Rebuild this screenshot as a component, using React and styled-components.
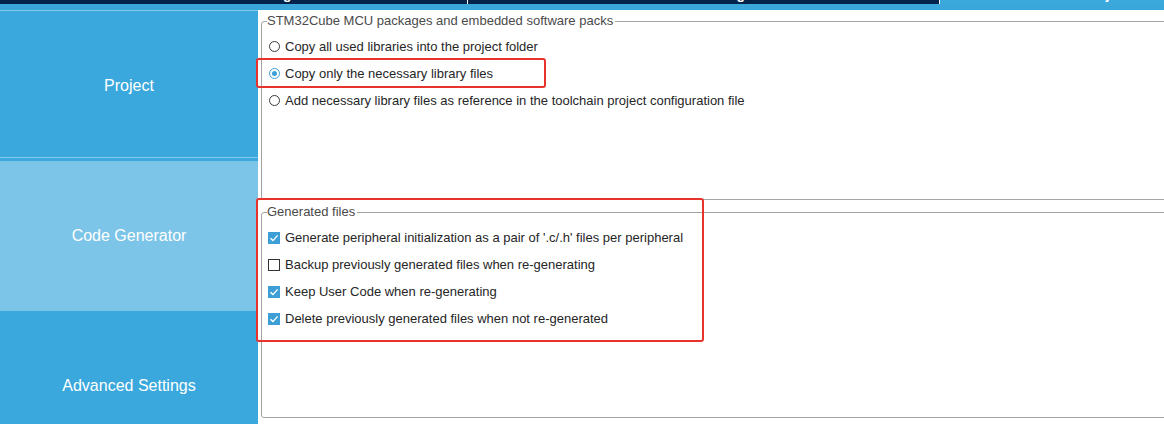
import React from "react";
import styled, { createGlobalStyle } from "styled-components";

const Global = createGlobalStyle`
  html, body { margin: 0; padding: 0; background: #fff; }
  body { font-family: "Liberation Sans", Arial, sans-serif; }
  #root { width: 1164px; height: 424px; overflow: hidden; }
`;

const Page = styled.div`
  position: relative;
  width: 1164px;
  height: 424px;
  display: flex;
  flex-direction: column;
  overflow: hidden;
  background: #fff;
`;

const Tabs = styled.div`
  display: flex;
  height: 4px;
  flex-shrink: 0;
  overflow: hidden;
`;

const Tab = styled.div`
  width: ${(p) => p.$w}px;
  flex-shrink: 0;
  background: ${(p) => (p.$active ? "#3ba9dc" : "#03234b")};
  border-right: ${(p) => (p.$sep ? "1px solid #fff" : "none")};
  display: flex;
  justify-content: center;
  overflow: hidden;
`;

const TabLabel = styled.span`
  color: #fff;
  font-size: 14px;
  font-weight: bold;
  line-height: 16px;
  margin-top: -14px;
  white-space: nowrap;
  padding-left: ${(p) => p.$shift || 0}px;
`;

const Strip = styled.div`
  height: 6px;
  flex-shrink: 0;
  background: #3ba6d9;
`;

const Body = styled.div`
  flex: 1;
  display: flex;
  min-height: 0;
`;

const Sidebar = styled.nav`
  width: 258px;
  flex-shrink: 0;
  background: #3aa8dc;
  border-top: 1px solid #86c9ea;
  display: flex;
  flex-direction: column;
`;

const NavItem = styled.div`
  height: 150px;
  flex-shrink: 0;
  display: flex;
  align-items: center;
  justify-content: center;
  color: #fff;
  font-size: 16px;
  background: ${(p) => (p.$selected ? "#7cc5e8" : "#3aa8dc")};
  box-shadow: ${(p) =>
    p.$divider ? "inset 0 -3px 0 #3aa8dc, inset 0 -4px 0 #86c9ea" : "none"};
`;

const Main = styled.main`
  flex: 1;
  min-width: 0;
  overflow: hidden;
  padding: 4px 0 0 3px;
  display: flex;
  flex-direction: column;
  gap: 5px;
`;

const Group = styled.fieldset`
  margin: 0 -20px 0 0;
  padding: 5px 0 0 6px;
  border: 1px solid #a3a3a3;
  border-radius: 3px;
  height: ${(p) => p.$h}px;
  box-sizing: border-box;
  flex-shrink: 0;
`;

const Legend = styled.legend`
  font-size: 13px;
  color: #4a4a4a;
  padding: 0 2px 0 0;
  margin-left: -1px;
  line-height: 14px;
`;

const Row = styled.label`
  display: flex;
  align-items: center;
  height: 27px;
  gap: 5px;
  font-size: 13px;
  color: #262626;
  white-space: nowrap;
`;

const Radio = styled.span`
  width: 11px;
  height: 11px;
  box-sizing: border-box;
  border-radius: 50%;
  border: 1px solid ${(p) => (p.$on ? "#3a9fd6" : "#3a3a3a")};
  background: #fff;
  display: flex;
  align-items: center;
  justify-content: center;
  margin-left: 1px;
  flex-shrink: 0;
  &::after {
    content: "";
    width: 5px;
    height: 5px;
    border-radius: 50%;
    background: ${(p) => (p.$on ? "#3a9fd6" : "transparent")};
  }
`;

const Box = styled.span`
  width: 12px;
  height: 12px;
  box-sizing: border-box;
  border: 1px solid ${(p) => (p.$on ? "#3d9fd6" : "#333")};
  background: ${(p) => (p.$on ? "#3d9fd6" : "#fff")};
  display: flex;
  align-items: center;
  justify-content: center;
  flex-shrink: 0;
`;

const Mark = styled.div`
  position: absolute;
  left: ${(p) => p.$x}px;
  top: ${(p) => p.$y}px;
  width: ${(p) => p.$w}px;
  height: ${(p) => p.$h}px;
  box-sizing: border-box;
  border: 2px solid #e8332d;
  border-radius: 3px;
  pointer-events: none;
`;

const Check = () => (
  <svg width="10" height="10" viewBox="0 0 10 10">
    <path d="M1.5 5.2 L4 7.6 L8.6 2.4" fill="none" stroke="#fff" strokeWidth="1.4" />
  </svg>
);

const radios = [
  ["Copy all used libraries into the project folder", false],
  ["Copy only the necessary library files", true],
  ["Add necessary library files as reference in the toolchain project configuration file", false],
];

const checks = [
  ["Generate peripheral initialization as a pair of '.c/.h' files per peripheral", true],
  ["Backup previously generated files when re-generating", false],
  ["Keep User Code when re-generating", true],
  ["Delete previously generated files when not re-generated", true],
];

export default function App() {
  return (
    <Page>
      <Global />
      <Tabs>
        <Tab $w={467} $sep>
          <TabLabel $shift={58}>Pinout &amp; Configuration</TabLabel>
        </Tab>
        <Tab $w={471} $sep>
          <TabLabel $shift={44}>Clock Configuration</TabLabel>
        </Tab>
        <Tab $w={226} $active>
          <TabLabel $shift={168}>Project Manager</TabLabel>
        </Tab>
      </Tabs>
      <Strip />
      <Body>
        <Sidebar>
          <NavItem $divider>Project</NavItem>
          <NavItem $selected>Code Generator</NavItem>
          <NavItem>Advanced Settings</NavItem>
        </Sidebar>
        <Main>
          <Group $h={186}>
            <Legend>STM32Cube MCU packages and embedded software packs</Legend>
            {radios.map(([t, on]) => (
              <Row key={t}>
                <Radio $on={on} />
                {t}
              </Row>
            ))}
          </Group>
          <Group $h={213}>
            <Legend>Generated files</Legend>
            {checks.map(([t, on]) => (
              <Row key={t}>
                <Box $on={on}>{on && <Check />}</Box>
                {t}
              </Row>
            ))}
          </Group>
        </Main>
      </Body>
      <Mark $x={256} $y={58} $w={290} $h={30} />
      <Mark $x={256} $y={198} $w={448} $h={144} />
    </Page>
  );
}
